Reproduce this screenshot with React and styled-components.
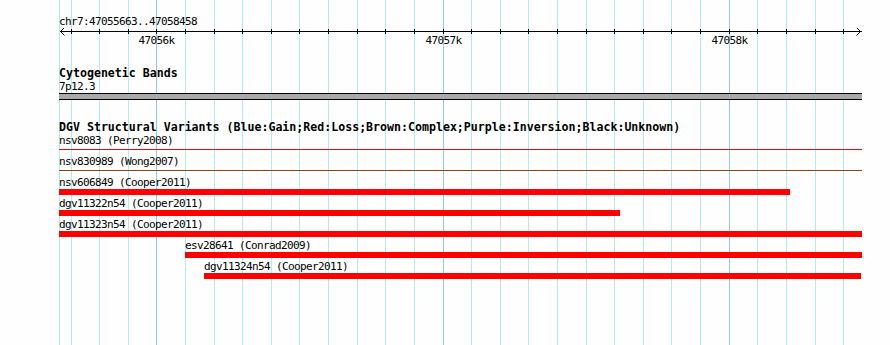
import React from 'react';
import styled, { createGlobalStyle } from 'styled-components';

// pixel columns of the 100bp grid, as drawn by the browser image
const GRID = [59, 71, 99, 128, 156, 185, 214, 242, 271, 299, 328, 357, 385, 414, 443, 471, 500, 528, 557, 586, 614, 643, 671, 700, 729, 757, 786, 815, 843];
const MAJOR = { 156: '47056k', 443: '47057k', 729: '47058k' };
const TRACK_LEFT = 59;
const TRACK_RIGHT = 862;

const VARIANTS = [
    { id: 'nsv8083', study: 'Perry2008', line: true, color: '#ff0000', from: 59, to: 862 },
    { id: 'nsv830989', study: 'Wong2007', line: true, color: '#8b4513', from: 59, to: 862 },
    { id: 'nsv606849', study: 'Cooper2011', from: 59, to: 790 },
    { id: 'dgv11322n54', study: 'Cooper2011', from: 59, to: 620 },
    { id: 'dgv11323n54', study: 'Cooper2011', from: 59, to: 862 },
    { id: 'esv28641', study: 'Conrad2009', from: 185, to: 862 },
    { id: 'dgv11324n54', study: 'Cooper2011', from: 204, to: 861 },
];

const GlobalStyle = createGlobalStyle`
    html, body {
        margin: 0;
        padding: 0;
        background: #fdfefd;
    }
`;

const Page = styled.div`
    position: relative;
    width: 890px;
    height: 345px;
    overflow: hidden;
    background: #fdfefd;
    font-family: 'DejaVu Sans Mono', 'Liberation Mono', monospace;
    color: #000;
`;

/* grid sits behind all the tracks */
const GridLayer = styled.svg`
    position: absolute;
    inset: 0;
    z-index: 0;
`;

const Tracks = styled.div`
    position: relative;
    z-index: 1;
    display: flex;
    flex-direction: column;
`;

const RulerTrack = styled.section`
    display: flex;
    flex-direction: column;
    padding-top: 15px;
`;

const Small = styled.div`
    font-size: 11px;
    letter-spacing: -0.62px;
    line-height: 13px;
    height: 13px;
    white-space: pre;
    padding-left: ${TRACK_LEFT}px;
`;

const RulerSvg = styled.svg`
    display: block;
    text {
        font-family: 'DejaVu Sans Mono', 'Liberation Mono', monospace;
        font-size: 11px;
        letter-spacing: -0.62px;
    }
`;

const Track = styled.section`
    display: flex;
    flex-direction: column;
    margin-top: ${p => p.$gap}px;
`;

const Title = styled.div`
    font-size: 11.6px;
    font-weight: bold;
    line-height: 13px;
    height: 13px;
    white-space: pre;
    padding-left: ${TRACK_LEFT}px;
`;

const Band = styled.div`
    margin-left: ${TRACK_LEFT}px;
    width: ${TRACK_RIGHT - TRACK_LEFT}px;
    height: 5px;
    background: #a9a9a9;
    border-top: 1px solid #000;
    border-bottom: 1px solid #000;
`;

const Row = styled.div`
    display: flex;
    flex-direction: column;
    height: 21px;
`;

const RowLabel = styled.div`
    font-size: 11px;
    letter-spacing: -0.62px;
    line-height: 13px;
    height: 13px;
    white-space: pre;
`;

const Bar = styled.div`
    height: 6px;
    background: #ff0000;
`;

const Rule = styled.div`
    margin-top: 2px;
    height: 1px;
    background: ${p => p.$color};
`;

function Grid() {
    return (
        <GridLayer width="890" height="345">
            {GRID.map(x => (
                <line key={x} x1={x + 0.5} x2={x + 0.5} y1="0" y2="345"
                    stroke={MAJOR[x] ? '#8ecbea' : '#afeeee'} strokeWidth="1" />
            ))}
        </GridLayer>
    );
}

function Ruler() {
    const y = 3.5;
    return (
        <RulerSvg width="890" height="20">
            <line x1="60" x2="862" y1={y} y2={y} stroke="#000" />
            <path d={`M64.5 ${y - 4} L60.5 ${y} L64.5 ${y + 4}`} fill="none" stroke="#000" />
            <path d={`M856.5 ${y - 4} L860.5 ${y} L856.5 ${y + 4}`} fill="none" stroke="#000" />
            {GRID.slice(1).map(x => (
                <line key={x} x1={x + 0.5} x2={x + 0.5} y1="1" y2="6" stroke="#000" />
            ))}
            {Object.entries(MAJOR).map(([x, label]) => (
                <text key={x} x={Number(x) + 0.5} y="16" textAnchor="middle">
                    {label}
                </text>
            ))}
        </RulerSvg>
    );
}

export default function App() {
    return (
        <Page>
            <GlobalStyle />
            <Grid />
            <Tracks>
                <RulerTrack>
                    <Small>chr7:47055663..47058458</Small>
                    <Ruler />
                </RulerTrack>

                <Track $gap={19}>
                    <Title>Cytogenetic Bands</Title>
                    <Small>7p12.3</Small>
                    <Band />
                </Track>

                <Track $gap={21}>
                    <Title>DGV Structural Variants (Blue:Gain;Red:Loss;Brown:Complex;Purple:Inversion;Black:Unknown)</Title>
                    {VARIANTS.map(v => (
                        <Row key={v.id} style={{ paddingLeft: v.from }}>
                            <RowLabel>{`${v.id} (${v.study})`}</RowLabel>
                            {v.line
                                ? <Rule $color={v.color} style={{ width: v.to - v.from }} />
                                : <Bar style={{ width: v.to - v.from }} />}
                        </Row>
                    ))}
                </Track>
            </Tracks>
        </Page>
    );
}
